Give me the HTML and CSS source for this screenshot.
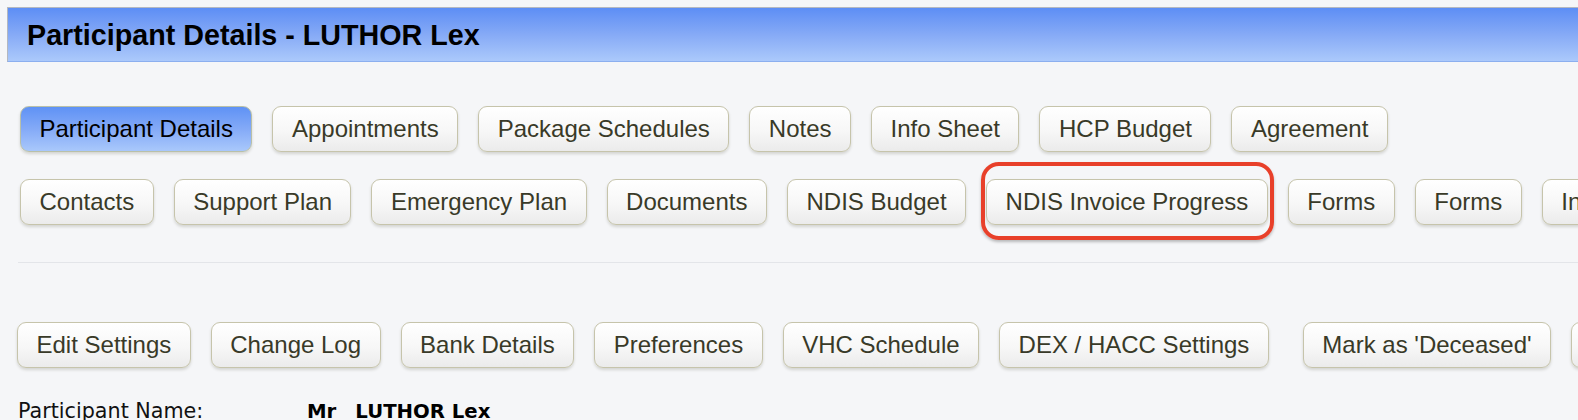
FILE: index.html
```html
<!DOCTYPE html>
<html lang="en">
<head>
<meta charset="utf-8">
<title>Participant Details - LUTHOR Lex</title>
<link rel="stylesheet" href="styles.css">
</head>
<body>
<div class="page">
  <div class="title-bar"><h1 class="title">Participant Details - LUTHOR Lex</h1></div>

  <div class="tab-row row-one">
    <button class="btn btn-active">Participant Details</button>
    <button class="btn">Appointments</button>
    <button class="btn">Package Schedules</button>
    <button class="btn">Notes</button>
    <button class="btn">Info Sheet</button>
    <button class="btn">HCP Budget</button>
    <button class="btn">Agreement</button>
  </div>

  <div class="tab-row row-two">
    <button class="btn">Contacts</button>
    <button class="btn">Support Plan</button>
    <button class="btn">Emergency Plan</button>
    <button class="btn">Documents</button>
    <button class="btn">NDIS Budget</button>
    <span class="highlight-wrap">
      <button class="btn">NDIS Invoice Progress</button>
      <span class="highlight-ring"></span>
    </span>
    <button class="btn">Forms</button>
    <button class="btn">Forms</button>
    <button class="btn">Invoices</button>
  </div>

  <div class="divider"></div>

  <div class="tab-row row-three">
    <button class="btn">Edit Settings</button>
    <button class="btn">Change Log</button>
    <button class="btn">Bank Details</button>
    <button class="btn">Preferences</button>
    <button class="btn">VHC Schedule</button>
    <button class="btn">DEX / HACC Settings</button>
    <button class="btn btn-spaced">Mark as 'Deceased'</button>
    <button class="btn">Delete</button>
  </div>

  <div class="info-row">
    <span class="info-label">Participant Name:</span>
    <span class="info-value"><span class="info-salutation">Mr</span><span class="info-name">LUTHOR Lex</span></span>
  </div>
</div>
</body>
</html>
```
FILE: styles.css
```css
html, body {
  margin: 0;
  padding: 0;
  overflow: hidden;
  background: #f5f6f8;
  width: 1578px;
  height: 420px;
}

.page {
  padding: 7px 0 0 7px;
  font-family: "Liberation Sans", Arial, sans-serif;
}

.title-bar {
  height: 55px;
  box-sizing: border-box;
  border-top: 1px solid #b4b8c0;
  border-left: 1px solid #b4b8c0;
  border-bottom: 1px solid #8cafef;
  background: linear-gradient(to bottom, #5d8ef5 0%, #86aaf6 50%, #abc9fb 100%);
  display: flex;
  align-items: center;
  padding-left: 19px;
  margin-right: -20px;
}

.title {
  margin: 0;
  font-size: 28.7px;
  font-weight: bold;
  color: #000;
  line-height: 34px;
}

.tab-row {
  display: flex;
  flex-wrap: nowrap;
  gap: 20px;
  white-space: nowrap;
}

.row-one {
  margin-top: 44px;
  padding-left: 13px;
}

.row-two {
  margin-top: 27px;
  padding-left: 13px;
}

.row-three {
  margin-top: 59px;
  padding-left: 10px;
}

.btn {
  flex-shrink: 0;
  height: 46px;
  box-sizing: border-box;
  padding: 0 18.5px;
  margin: 0;
  border: 1px solid #c6c4ab;
  border-radius: 9px;
  background: linear-gradient(to bottom, #ffffff 0%, #f7f7f7 55%, #ebebeb 100%);
  box-shadow: 0 2px 3px rgba(60, 60, 40, 0.18);
  font-family: "Liberation Sans", Arial, sans-serif;
  font-size: 24px;
  line-height: 44px;
  color: #393a28;
  white-space: nowrap;
}

.btn-active {
  background: linear-gradient(to bottom, #5f92f5 0%, #84aaf7 50%, #a9c8fb 100%);
  border-color: #b9c0a8;
  color: #000;
}

.btn-spaced {
  margin-left: 14px;
}

.highlight-wrap {
  position: relative;
  display: flex;
  flex-shrink: 0;
}

.highlight-ring {
  position: absolute;
  left: -5px;
  top: -17px;
  width: 293px;
  height: 78px;
  box-sizing: border-box;
  border: 4px solid #e8402a;
  border-radius: 18px;
  box-shadow: 0 2px 3px rgba(0, 0, 0, 0.25);
  pointer-events: none;
}

.divider {
  margin-top: 37px;
  margin-left: 11px;
  height: 1px;
  background: #e3e5e9;
}

.info-row {
  margin-top: 30px;
  padding-left: 11px;
  display: flex;
  align-items: baseline;
  font-family: "DejaVu Sans", Verdana, sans-serif;
  font-size: 20.7px;
  line-height: 26px;
  color: #111;
}

.info-label {
  width: 289px;
  flex-shrink: 0;
}

.info-value {
  font-weight: bold;
  font-size: 19.7px;
  color: #000;
}

.info-name {
  margin-left: 19px;
}
```
